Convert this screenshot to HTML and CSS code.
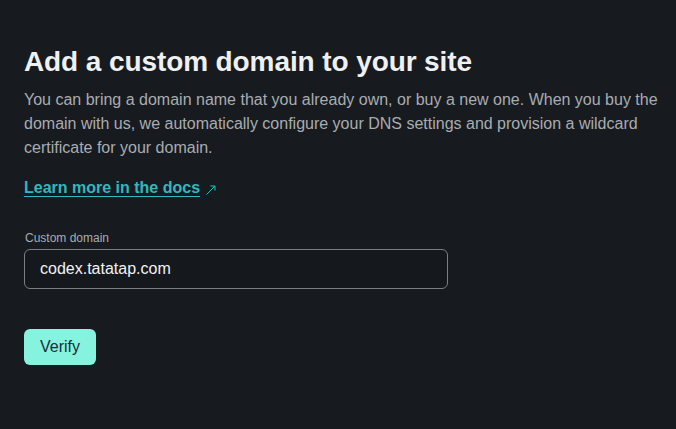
FILE: index.html
```html
<!DOCTYPE html>
<html>
<head>
<meta charset="utf-8">
<link rel="stylesheet" href="styles.css">
</head>
<body>
<main class="card">
  <h1 class="title">Add a custom domain to your site</h1>
  <p class="desc">You can bring a domain name that you already own, or buy a new one. When you buy the domain with us, we automatically configure your DNS settings and provision a wildcard certificate for your domain.</p>
  <p class="learn"><a class="link" href="#">Learn more in the docs</a><svg class="arrow" width="12" height="12" viewBox="0 0 12 12"><path d="M1.5 10.5 L10 2 M5.5 2 H10 V6.5" fill="none" stroke="#32b8be" stroke-width="1"/></svg></p>
  <form class="form">
    <label class="label" for="domain">Custom domain</label>
    <input class="input" id="domain" type="text" value="codex.tatatap.com">
    <button class="btn" type="button">Verify</button>
  </form>
</main>
</body>
</html>
```
FILE: styles.css
```css
html, body { margin: 0; padding: 0; }
body {
  background: #171b1f;
  font-family: "Liberation Sans", Arial, sans-serif;
  color: #e9ebed;
  width: 676px;
  height: 429px;
  overflow: hidden;
}
.card { padding: 42px 24px 0 24px; }
.title {
  margin: 0;
  font-size: 28px;
  line-height: 40px;
  font-weight: 700;
  color: #eef0f2;
  letter-spacing: -0.1px;
}
.desc {
  margin: 6px 0 0 0;
  font-size: 16px;
  line-height: 24px;
  color: #a9acb1;
  width: 640px;
}
.learn { margin: 16px 0 0 0; display: flex; align-items: center; gap: 5px; line-height: 24px; }
.link {
  font-size: 16px;
  font-weight: 700;
  color: #32b8be;
  text-decoration: underline;
  text-underline-offset: 3px;
}
.arrow { margin-top: 3px; }
.form { margin-top: 30px; display: flex; flex-direction: column; align-items: flex-start; }
.label { font-size: 12px; line-height: 16px; color: #a9acb1; margin: 0 0 3px 1px; }
.input {
  box-sizing: border-box;
  width: 424px;
  height: 40px;
  background: #15181c;
  border: 1px solid #7a7d81;
  border-radius: 6px;
  padding: 0 15px;
  font-family: inherit;
  font-size: 16px;
  color: #f1f2f4;
}
.btn {
  margin-top: 40px;
  box-sizing: border-box;
  height: 36px;
  padding: 0 16px;
  border: none;
  border-radius: 6px;
  background: #86f3df;
  color: #1a2e3a;
  font-family: inherit;
  font-size: 16px;
}
```
